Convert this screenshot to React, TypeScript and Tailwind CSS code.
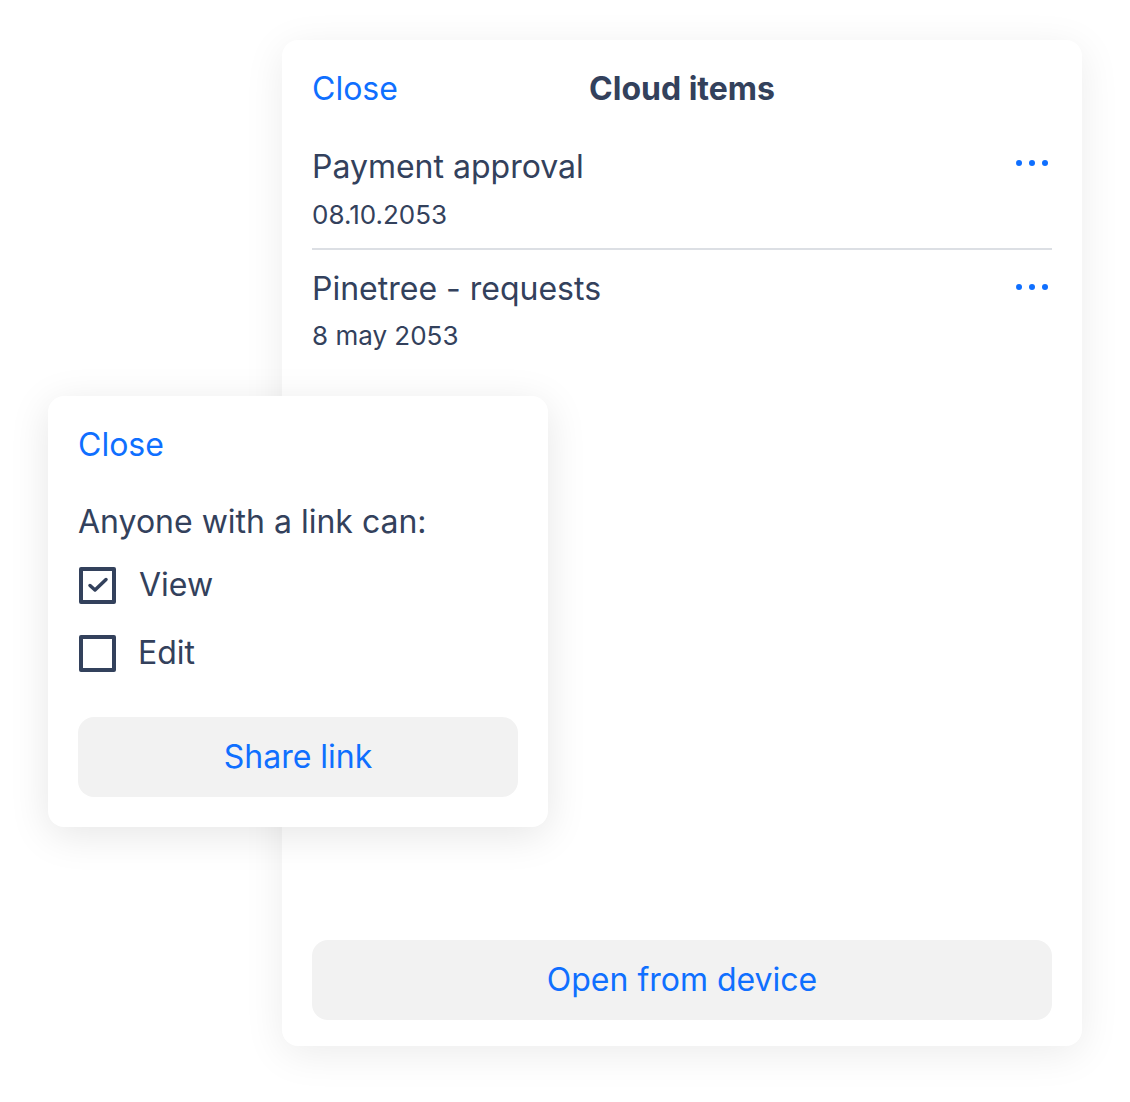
import React from "react";

const font = { fontFamily: "Inter, 'Noto Sans', sans-serif" };

function Dots() {
  return (
    <div className="flex gap-[7px]">
      <span className="block h-[6px] w-[6px] rounded-full bg-[#0f6fff]" />
      <span className="block h-[6px] w-[6px] rounded-full bg-[#0f6fff]" />
      <span className="block h-[6px] w-[6px] rounded-full bg-[#0f6fff]" />
    </div>
  );
}

function Item({ title, date, divider, first }: { title: string; date: string; divider?: boolean; first?: boolean }) {
  return (
    <div className={divider ? "border-b-2 border-[#dcdfe4] pb-[17px]" : "pb-[20px]"}>
      <div className={first ? "flex items-start justify-between pt-[2px]" : "flex items-start justify-between"}>
        <div className="text-[32px] leading-[38px] text-[#33415c]">{title}</div>
        <div className={first ? "pt-[12px] pr-[4px]" : "pt-[14px] pr-[4px]"}><Dots /></div>
      </div>
      <div className={first ? "mt-[13px] text-[26px] leading-[32px] text-[#33415c]" : "mt-[12px] text-[26px] leading-[32px] text-[#33415c]"}>{date}</div>
    </div>
  );
}

function Check({ checked }: { checked?: boolean }) {
  return (
    <div className="flex h-[37px] w-[37px] items-center justify-center rounded-[2px] border-[4px] border-[#33415c]">
      {checked && (
        <svg width="24" height="24" viewBox="0 0 24 24" fill="none">
          <path d="M4 12.5l5 4.5L20 6.5" stroke="#33415c" strokeWidth="3.5" strokeLinecap="round" strokeLinejoin="round" />
        </svg>
      )}
    </div>
  );
}

export default function App() {
  return (
    <div className="relative h-[1102px] w-[1130px] bg-white" style={font}>
      <div className="absolute left-[282px] top-[40px] flex h-[1006px] w-[800px] flex-col rounded-[16px] bg-white px-[30px] pb-[26px] pt-[28px] shadow-[0_8px_40px_rgba(0,0,0,0.08)]">
        <div className="relative flex h-[42px] items-center">
          <span className="text-[32px] text-[#0f6fff]">Close</span>
          <span className="absolute left-1/2 -translate-x-1/2 text-[32px] font-bold text-[#33415c]">Cloud items</span>
        </div>
        <div className="mt-[36px] flex flex-col gap-[20px]">
          <Item title="Payment approval" date="08.10.2053" divider first />
          <Item title="Pinetree - requests" date="8 may 2053" />
        </div>
        <div className="flex-1" />
        <button className="flex h-[80px] w-full items-center justify-center rounded-[16px] bg-[#f2f2f2] text-[32px] text-[#0f6fff]">
          Open from device
        </button>
      </div>

      <div className="absolute left-[48px] top-[396px] flex w-[500px] flex-col rounded-[16px] bg-white px-[30px] pb-[30px] pt-[28px] shadow-[0_8px_40px_rgba(0,0,0,0.10)]">
        <div className="h-[42px] text-[32px] leading-[42px] text-[#0f6fff]">Close</div>
        <div className="mt-[36px] text-[32px] leading-[40px] text-[#33415c]">Anyone with a link can:</div>
        <div className="mt-[24px] flex items-center gap-[23px] pl-[1px]">
          <Check checked />
          <span className="text-[32px] leading-[38px] text-[#33415c]">View</span>
        </div>
        <div className="mt-[30px] flex items-center gap-[22px] pl-[1px]">
          <Check />
          <span className="text-[32px] leading-[38px] text-[#33415c]">Edit</span>
        </div>
        <button className="mt-[45px] flex h-[80px] w-full items-center justify-center rounded-[16px] bg-[#f2f2f2] text-[32px] text-[#0f6fff]">
          Share link
        </button>
      </div>
    </div>
  );
}
